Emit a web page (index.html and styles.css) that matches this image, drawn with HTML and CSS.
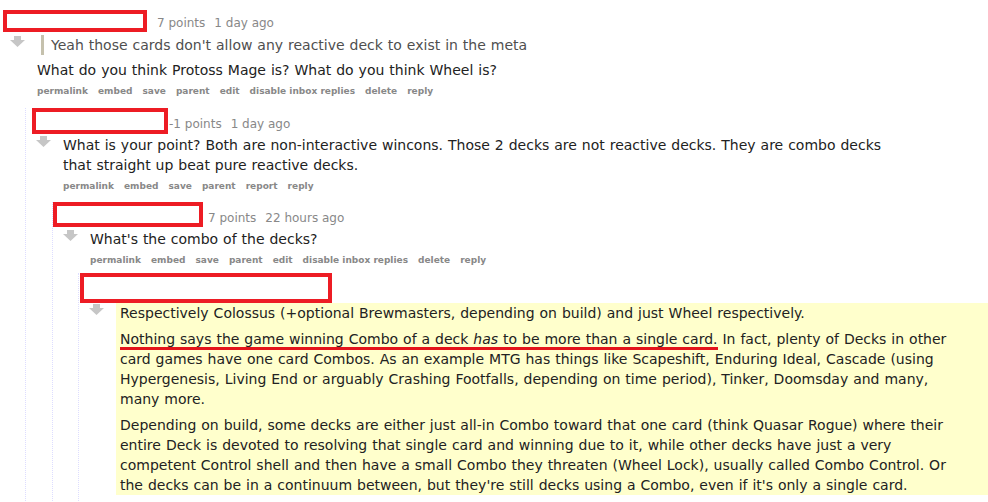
FILE: index.html
```html
<!DOCTYPE html>
<html>
<head>
<title>Comments</title>
<link rel="stylesheet" href="styles.css">
</head>
<body>
<div class="thread">
  <div class="comment">
    <div class="tagline">
      <span class="redact r1"></span>
      <span class="score">7 points</span><span class="time">1 day ago</span>
    </div>
    <div class="entry">
      <div class="midcol"><svg class="down" width="15" height="11" viewBox="0 0 15 11"><path d="M4 0h7v4h4l-7.5 7L0 4h4z"/></svg></div>
      <div class="body">
        <div class="md">
          <blockquote><p>Yeah those cards don't allow any reactive deck to exist in the meta</p></blockquote>
          <p>What do you think Protoss Mage is? What do you think Wheel is?</p>
        </div>
        <ul class="buttons">
          <li>permalink</li><li>embed</li><li>save</li><li>parent</li><li>edit</li><li>disable inbox replies</li><li>delete</li><li>reply</li>
        </ul>
      </div>
    </div>

    <div class="child c2">
      <div class="comment">
        <div class="tagline">
          <span class="redact r2"></span>
          <span class="score">-1 points</span><span class="time">1 day ago</span>
        </div>
        <div class="entry">
          <div class="midcol"><svg class="down" width="15" height="11" viewBox="0 0 15 11"><path d="M4 0h7v4h4l-7.5 7L0 4h4z"/></svg></div>
          <div class="body">
            <div class="md">
              <p>What is your point? Both are non-interactive wincons. Those 2 decks are not reactive decks. They are combo decks that straight up beat pure reactive decks.</p>
            </div>
            <ul class="buttons">
              <li>permalink</li><li>embed</li><li>save</li><li>parent</li><li>report</li><li>reply</li>
            </ul>
          </div>
        </div>

        <div class="child c3">
          <div class="comment">
            <div class="tagline">
              <span class="redact r3"></span>
              <span class="score">7 points</span><span class="time">22 hours ago</span>
            </div>
            <div class="entry">
              <div class="midcol"><svg class="down" width="15" height="11" viewBox="0 0 15 11"><path d="M4 0h7v4h4l-7.5 7L0 4h4z"/></svg></div>
              <div class="body">
                <div class="md">
                  <p>What's the combo of the decks?</p>
                </div>
                <ul class="buttons">
                  <li>permalink</li><li>embed</li><li>save</li><li>parent</li><li>edit</li><li>disable inbox replies</li><li>delete</li><li>reply</li>
                </ul>
              </div>
            </div>

            <div class="child c4">
              <div class="comment">
                <div class="tagline">
                  <span class="redact r4"></span>
                </div>
                <div class="entry">
                  <div class="midcol"><svg class="down" width="15" height="11" viewBox="0 0 15 11"><path d="M4 0h7v4h4l-7.5 7L0 4h4z"/></svg></div>
                  <div class="body">
                    <div class="usertext hl">
                      <div class="md">
                        <p>Respectively Colossus (+optional Brewmasters, depending on build) and just Wheel respectively.</p>
                        <p><span class="mark">Nothing says the game winning Combo of a deck <em>has</em> to be more than a single card.</span> In fact, plenty of Decks in other card games have one card Combos. As an example MTG has things like Scapeshift, Enduring Ideal, Cascade (using Hypergenesis, Living End or arguably Crashing Footfalls, depending on time period), Tinker, Doomsday and many, many more.</p>
                        <p>Depending on build, some decks are either just all-in Combo toward that one card (think Quasar Rogue) where their entire Deck is devoted to resolving that single card and winning due to it, while other decks have just a very competent Control shell and then have a small Combo they threaten (Wheel Lock), usually called Combo Control. Or the decks can be in a continuum between, but they're still decks using a Combo, even if it's only a single card.</p>
                      </div>
                    </div>
                    <ul class="buttons">
                      <li>permalink</li><li>embed</li><li>save</li><li>parent</li><li>report</li><li>reply</li>
                    </ul>
                  </div>
                </div>
              </div>
            </div>

          </div>
        </div>

      </div>
    </div>

  </div>
</div>
</body>
</html>
```

FILE: styles.css
```css
body {margin: 0;font-family: "DejaVu Sans", Verdana, sans-serif;color: #222;background-color: #fff;overflow: hidden;}
.thread {padding-top: 10px;}
.tagline {display: flex;align-items: center;font-size: 12px;color: #888;}
.score, .time {margin-top: 4px;}
.c2 .score, .c2 .time {margin-top: 6px;}
.time {margin-left: 9px;}
.redact {box-sizing: border-box;flex: none;border: 4px solid #ed1c24;background-color: #fff;}
.r1 {margin-left: 3px;margin-right: 10px;width: 144px;height: 22px;}
.r2 {margin-left: 6px;margin-right: 1px;width: 136px;height: 26px;}
.r3 {margin-right: 5px;width: 150px;height: 25px;}
.r4 {margin-left: 1px;width: 252px;height: 30px;}
.entry {display: flex;margin-top: 3px;}
.c2 .entry {margin-top: 1px;}
.c3 .entry {margin-top: 2px;}
.c4 .entry {margin-top: 0;}
.midcol {flex: none;width: 27px;padding-left: 10px;}
.down {display: block;margin-top: 1px;fill: #c6c6c6;}
.body {flex: 1;min-width: 0;}
.md {max-width: 840px;font-size: 14px;line-height: 20px;word-spacing: 0.5px;}
.md p {margin: 0 0 6px 0;}
.md p:last-child {margin-bottom: 0;}
.md blockquote {margin: 0 0 5px 4px;padding-left: 7px;border-left: 3px solid #c5c1ad;color: #4f4f4f;}
.md blockquote p {margin: 0;}
.hl {background-color: #ffffcc;padding-left: 4px;}
.mark {position: relative;}
.mark::after {content: "";position: absolute;left: 0;right: -1px;bottom: -3px;height: 3px;background-color: #e3141b;}
.buttons {display: flex;gap: 10px;list-style: none;margin: 4px 0 0 0;padding: 0;font-size: 9px;line-height: 14px;font-weight: bold;color: #888;}
.child {border-left: 1px dotted #ddf;}
.c2 {margin: 10px 0 0 25px;}
.c3 {margin: 9px 0 0 26px;}
.c4 {margin: 6px 0 0 25px;}
```
